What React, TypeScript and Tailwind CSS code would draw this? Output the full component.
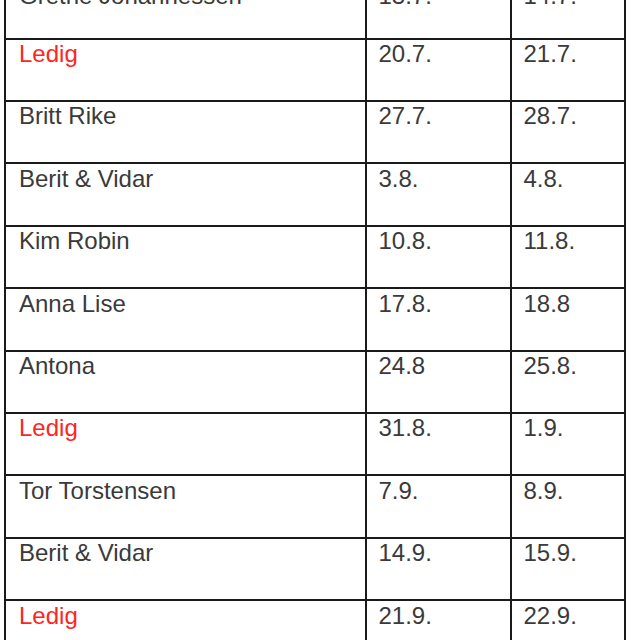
import { clsx } from "clsx";

type Booking = {
  name: string;
  from: string;
  to: string;
  free?: boolean;
};

const bookings: Booking[] = [
  { name: "Grethe Johannessen", from: "13.7.", to: "14.7." },
  { name: "Ledig", from: "20.7.", to: "21.7.", free: true },
  { name: "Britt Rike", from: "27.7.", to: "28.7." },
  { name: "Berit & Vidar", from: "3.8.", to: "4.8." },
  { name: "Kim Robin", from: "10.8.", to: "11.8." },
  { name: "Anna Lise", from: "17.8.", to: "18.8" },
  { name: "Antona", from: "24.8", to: "25.8." },
  { name: "Ledig", from: "31.8.", to: "1.9.", free: true },
  { name: "Tor Torstensen", from: "7.9.", to: "8.9." },
  { name: "Berit & Vidar", from: "14.9.", to: "15.9." },
  { name: "Ledig", from: "21.9.", to: "22.9.", free: true },
  { name: "Ledig", from: "28.9.", to: "29.9.", free: true },
];

export default function App() {
  return (
    <div
      className="h-[640px] w-[640px] overflow-hidden bg-white text-[24px] leading-[28px] text-[#3a3a3a]"
      style={{ fontFamily: '"Liberation Sans", Arial, sans-serif' }}
    >
      <div className="ml-[4px] mt-[-24.8px] w-[621.5px]">
        {bookings.map((row, i) => {
          const pad = i === 0 ? "pt-[4.5px]" : "pt-[0.5px]";
          return (
            <div
              key={i}
              className="flex h-[62.4px] border-r-2 border-t-2 border-[#1a1a1a]"
            >
              <div
                className={clsx(
                  "w-[360.5px] shrink-0 border-l-2 border-[#1a1a1a] pl-[13px]",
                  pad,
                  row.free && "text-[#ff2424]"
                )}
              >
                {row.name}
              </div>
              <div className={clsx("w-[145.5px] shrink-0 border-l-2 border-[#1a1a1a] pl-[12px]", pad)}>
                {row.from}
              </div>
              <div className={clsx("w-[113.5px] shrink-0 border-l-2 border-[#1a1a1a] pl-[11.5px]", pad)}>
                {row.to}
              </div>
            </div>
          );
        })}
      </div>
    </div>
  );
}
